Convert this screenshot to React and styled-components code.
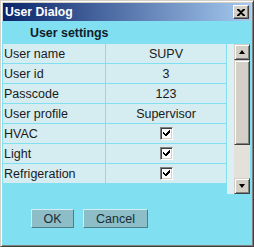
import React from 'react'
import styled, { createGlobalStyle } from 'styled-components'

const GlobalStyle = createGlobalStyle`
  html, body {
    margin: 0;
    padding: 0;
    background: #ffffff;
  }
`

const rows = [
  { label: 'User name', value: 'SUPV' },
  { label: 'User id', value: '3' },
  { label: 'Passcode', value: '123' },
  { label: 'User profile', value: 'Supervisor' },
  { label: 'HVAC', checked: true },
  { label: 'Light', checked: true },
  { label: 'Refrigeration', checked: true },
]

export default function App() {
  return (
    <>
      <GlobalStyle />
      <Window>
        <TitleBar>
          <TitleText>User Dialog</TitleText>
          <CloseButton>
            <svg width="8" height="7" viewBox="0 0 8 7">
              <path d="M0 0h2l2 2 2-2h2v1L5 3.5 8 6v1H6L4 5 2 7H0V6l3-2.5L0 1z" fill="#000" />
            </svg>
          </CloseButton>
        </TitleBar>
        <Body>
          <SectionTitle>User settings</SectionTitle>
          <ScrollPane>
            <Table>
              {rows.map((row) => (
                <React.Fragment key={row.label}>
                  <LabelCell>{row.label}</LabelCell>
                  <ValueCell>
                    {row.checked ? <CheckBox checked /> : row.value}
                  </ValueCell>
                </React.Fragment>
              ))}
            </Table>
            <Strip />
            <ScrollBar>
              <ArrowButton>
                <Arrow up />
              </ArrowButton>
              <Thumb />
              <Track />
              <ArrowButton>
                <Arrow />
              </ArrowButton>
            </ScrollBar>
          </ScrollPane>
          <ButtonRow>
            <Button width={43}>OK</Button>
            <Button width={65}>Cancel</Button>
          </ButtonRow>
        </Body>
      </Window>
    </>
  )
}

function CheckBox({ checked }) {
  return (
    <CheckFrame>
      {checked && (
        <svg width="7" height="7" viewBox="0 0 7 7">
          <path d="M0 2h1v1h1v1h1v-1h1v-1h1v-1h1v-1h1v3h-1v1h-1v1h-1v1h-2v-1h-1v-1h-1z" fill="#000" />
        </svg>
      )}
    </CheckFrame>
  )
}

const Window = styled.div`
  width: 254px;
  height: 247px;
  box-sizing: border-box;
  display: flex;
  flex-direction: column;
  background: #d4d0c8;
  border-top: 1px solid #d4d0c8;
  border-left: 1px solid #d4d0c8;
  border-right: 1px solid #404040;
  border-bottom: 1px solid #404040;
  box-shadow: inset 1px 1px #ffffff, inset -1px -1px #808080;
  padding: 2px 2px 2px 2px;
  font-family: 'Liberation Sans', Arial, sans-serif;
`

const TitleBar = styled.div`
  height: 18px;
  flex: none;
  display: flex;
  align-items: center;
  justify-content: space-between;
  padding: 0 2px 0 2px;
  background: linear-gradient(to right, #0a246a, #a6caf0);
`

const TitleText = styled.span`
  color: #ffffff;
  font-weight: bold;
  font-size: 12.2px;
  line-height: 18px;
`

const CloseButton = styled.div`
  width: 16px;
  height: 14px;
  box-sizing: border-box;
  display: flex;
  align-items: center;
  justify-content: center;
  background: #d4d0c8;
  border-top: 1px solid #ffffff;
  border-left: 1px solid #ffffff;
  border-right: 1px solid #404040;
  border-bottom: 1px solid #404040;
  box-shadow: inset -1px -1px #808080;
  padding-right: 1px;
`

const Body = styled.div`
  flex: 1;
  display: flex;
  flex-direction: column;
  background: #80dff0;
  margin: 0 -1px -1px -1px;
`

const SectionTitle = styled.div`
  height: 23px;
  flex: none;
  display: flex;
  align-items: center;
  padding-left: 28px;
  font-size: 12.4px;
  font-weight: bold;
  color: #101c28;
`

const ScrollPane = styled.div`
  height: 150px;
  flex: none;
  display: flex;
  align-items: flex-start;
  padding-left: 1px;
`

const Table = styled.div`
  display: grid;
  grid-template-columns: 102px 120px;
  grid-auto-rows: 19px;
  gap: 1px;
  padding: 0 1px 1px 0;
  background: #80dff0;
`

const LabelCell = styled.div`
  background: #d5ecf1;
  display: flex;
  align-items: center;
  padding-left: 1px;
  font-size: 12.5px;
  color: #1a1a1a;
  white-space: nowrap;
`

const ValueCell = styled(LabelCell)`
  justify-content: center;
  padding-left: 0;
`

const CheckFrame = styled.div`
  width: 13px;
  height: 13px;
  box-sizing: border-box;
  display: flex;
  align-items: center;
  justify-content: center;
  background: #ffffff;
  border-top: 1px solid #808080;
  border-left: 1px solid #808080;
  border-right: 1px solid #ffffff;
  border-bottom: 1px solid #ffffff;
  box-shadow: inset 1px 1px #404040, inset -1px -1px #d4d0c8;
`

const Strip = styled.div`
  width: 7px;
  height: 150px;
  background: #dcf0f4;
`

const ScrollBar = styled.div`
  width: 16px;
  height: 150px;
  display: flex;
  flex-direction: column;
`

const ArrowButton = styled.div`
  width: 16px;
  height: 16px;
  box-sizing: border-box;
  display: flex;
  align-items: center;
  justify-content: center;
  background: #d4d0c8;
  border-top: 1px solid #d4d0c8;
  border-left: 1px solid #d4d0c8;
  border-right: 1px solid #404040;
  border-bottom: 1px solid #404040;
  box-shadow: inset 1px 1px #ffffff, inset -1px -1px #808080;
`

const Arrow = styled.div`
  width: 0;
  height: 0;
  border-left: 3.5px solid transparent;
  border-right: 3.5px solid transparent;
  ${(p) => (p.up ? 'border-bottom: 4px solid #000;' : 'border-top: 4px solid #000;')}
`

const Thumb = styled(ArrowButton)`
  height: 85px;
`

const Track = styled.div`
  height: 33px;
  background: #e4e1db;
`

const ButtonRow = styled.div`
  display: flex;
  gap: 9px;
  padding: 15px 0 0 29px;
`

const Button = styled.div`
  width: ${(p) => p.width}px;
  height: 19px;
  box-sizing: border-box;
  display: flex;
  align-items: center;
  justify-content: center;
  background: #8dbdc6;
  border-top: 1px solid #d0eef4;
  border-left: 1px solid #d0eef4;
  border-right: 1px solid #4d7f89;
  border-bottom: 1px solid #4d7f89;
  font-size: 12.5px;
  color: #182c38;
`
